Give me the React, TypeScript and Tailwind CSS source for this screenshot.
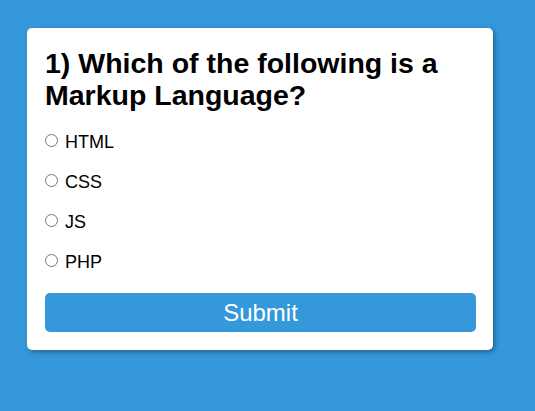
import React from "react";

export default function App() {
  const options = ["HTML", "CSS", "JS", "PHP"];
  return (
    <div
      className="min-h-screen w-full bg-[#3498db] pl-[27px] pt-[28px]"
      style={{ fontFamily: '"Liberation Sans", Arial, sans-serif' }}
    >
      <div className="w-[466px] bg-white rounded-[5px] shadow-[2px_2px_5px_rgba(0,0,0,0.35)] pt-[19px] pb-[18px] pl-[18px] pr-[17px]">
        <h2 className="text-[28.5px] leading-[32px] font-bold text-black">
          1) Which of the following is a Markup Language?
        </h2>
        <div className="mt-[19px] flex flex-col gap-[16px]">
          {options.map((o) => (
            <label key={o} className="flex items-start gap-[7px] text-[18px] leading-[24px] text-black">
              <input type="radio" name="q1" className="m-0 mt-[4px] w-[13px] h-[13px]" />
              <span>{o}</span>
            </label>
          ))}
        </div>
        <button className="mt-[19px] w-full h-[39px] bg-[#3498db] rounded-[5px] text-white text-[24px] leading-[28px]">
          Submit
        </button>
      </div>
    </div>
  );
}
